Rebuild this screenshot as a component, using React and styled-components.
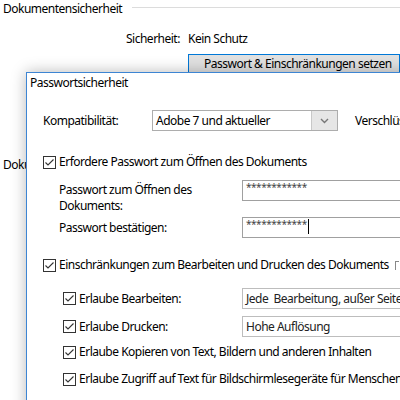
import React from 'react';
import styled, { createGlobalStyle } from 'styled-components';

const Global = createGlobalStyle`
  html, body { margin: 0; padding: 0; background: #fff; }
  body {
    font-family: "Noto Sans", "Segoe UI", sans-serif;
    font-size: 12px;
    letter-spacing: -0.5px;
    color: #000;
  }
`;

const Screen = styled.div`
  position: relative;
  width: 400px;
  height: 400px;
  overflow: hidden;
  background: #fff;
  line-height: 16px;
`;

const GroupHeader = styled.div`
  display: flex;
  align-items: center;
  height: 18px;
  padding-left: 3px;
`;

const GroupLine = styled.div`
  flex: 1;
  height: 1px;
  background: #dcdcdc;
  margin-left: 10px;
  margin-bottom: 3px;
`;

const SecRow = styled.div`
  display: flex;
  margin-top: 12px;
  padding-left: 126px;
  height: 18px;
  align-items: center;
`;

const SecLabel = styled.span`
  width: 62px;
`;

const ButtonRow = styled.div`
  padding-left: 188px;
  margin-top: 6px;
`;

const PushButton = styled.div`
  box-sizing: border-box;
  width: 212px;
  height: 20px;
  border: 1px solid #0078d7;
  background: #e1e1e1;
  padding-left: 15px;
  line-height: 18px;
  white-space: nowrap;
`;

const BackText = styled.div`
  margin-top: 83px;
  padding-left: 3px;
  white-space: nowrap;
`;

const Dialog = styled.div`
  position: absolute;
  left: 26px;
  top: 72px;
  right: -30px;
  bottom: -30px;
  background: #fff;
  border: 1px solid #3d85d3;
  box-shadow: 0 0 14px rgba(0, 0, 0, 0.28);
`;

const TitleBar = styled.div`
  height: 20px;
  line-height: 20px;
  padding-left: 3px;
`;

const Body = styled.div`
  padding-left: 16px;
`;

const Row = styled.div`
  display: flex;
  align-items: ${p => (p.$top ? 'flex-start' : 'center')};
  margin-top: ${p => p.$mt}px;
  padding-left: ${p => p.$indent || 0}px;
  min-height: ${p => p.$h || 16}px;
  white-space: nowrap;
`;

const FieldLabel = styled.div`
  width: ${p => p.$w}px;
  flex: none;
  padding-top: ${p => p.$pt || 0}px;
  white-space: normal;
`;

const Combo = styled.div`
  box-sizing: border-box;
  display: flex;
  width: 186px;
  height: 21px;
  border: 1px solid #adadad;
  flex: none;
`;

const ComboText = styled.div`
  flex: 1;
  padding-left: 3px;
  line-height: 19px;
`;

const ComboArrow = styled.div`
  width: 25px;
  background: #e6e6e6;
  border-left: 1px solid #c8c8c8;
  display: flex;
  align-items: center;
  justify-content: center;
`;

const AfterText = styled.span`
  margin-left: 17px;
`;

const CheckBox = styled.span`
  box-sizing: border-box;
  width: 13px;
  height: 13px;
  border: 1px solid #333;
  background: #fff;
  display: inline-flex;
  align-items: center;
  justify-content: center;
  flex: none;
  margin-right: 3px;
`;

const CheckLabel = styled.div`
  display: flex;
  align-items: center;
  width: ${p => (p.$w ? `${p.$w}px` : 'auto')};
  flex: none;
`;

const TextBox = styled.div`
  box-sizing: border-box;
  width: 200px;
  height: 21px;
  border: 1px solid #a0a0a0;
  padding-left: 3px;
  font-size: 10px;
  line-height: 13px;
  letter-spacing: -0.45px;
  color: #444;
  flex: none;
`;

const Caret = styled.span`
  display: inline-block;
  width: 1px;
  height: 15px;
  background: #000;
  vertical-align: top;
  margin-top: 1px;
  margin-left: 1px;
`;

const ReadBox = styled.div`
  box-sizing: border-box;
  width: 200px;
  height: 21px;
  border: 1px solid #bdbdbd;
  padding-left: 3px;
  line-height: 19px;
  color: #222;
  flex: none;
  white-space: nowrap;
`;

const EdgeTick = styled.div`
  position: absolute;
  right: 30px;
  top: 188px;
  width: 3px;
  height: 8px;
  border-left: 1px solid #888;
  border-top: 1px solid #888;
`;

const Check = ({ checked = true }) => (
  <CheckBox>
    {checked && (
      <svg width="11" height="11" viewBox="0 0 11 11">
        <path d="M1.5 5.5 L4 8 L9.5 2.5" fill="none" stroke="#333" strokeWidth="1.1" />
      </svg>
    )}
  </CheckBox>
);

export default function App() {
  return (
    <Screen>
      <Global />
      <GroupHeader>
        <span>Dokumentensicherheit</span>
        <GroupLine />
      </GroupHeader>
      <SecRow>
        <SecLabel>Sicherheit:</SecLabel>
        <span>Kein Schutz</span>
      </SecRow>
      <ButtonRow>
        <PushButton>Passwort &amp; Einschränkungen setzen</PushButton>
      </ButtonRow>
      <BackText>Dokumenteinschränkungen – Zusammenfassung</BackText>

      <Dialog>
        <TitleBar>Passwortsicherheit</TitleBar>
        <Body>
          <Row $mt={17} $h={21}>
            <FieldLabel $w={109}>Kompatibilität:</FieldLabel>
            <Combo>
              <ComboText>Adobe 7 und aktueller</ComboText>
              <ComboArrow>
                <svg width="9" height="6" viewBox="0 0 9 6">
                  <path d="M1 1 L4.5 4.5 L8 1" fill="none" stroke="#777" strokeWidth="1.4" />
                </svg>
              </ComboArrow>
            </Combo>
            <AfterText>Verschlüsselungsstufe: 128-Bit AES</AfterText>
          </Row>

          <Row $mt={23}>
            <CheckLabel>
              <Check />
              Erfordere Passwort zum Öffnen des Dokuments
            </CheckLabel>
          </Row>

          <Row $mt={10} $top $indent={16}>
            <FieldLabel $w={183} $pt={2}>Passwort zum Öffnen des Dokuments:</FieldLabel>
            <TextBox>************</TextBox>
          </Row>

          <Row $mt={3} $h={21} $indent={16}>
            <FieldLabel $w={183}>Passwort bestätigen:</FieldLabel>
            <TextBox>
              ************
              <Caret />
            </TextBox>
          </Row>

          <Row $mt={19}>
            <CheckLabel>
              <Check />
              Einschränkungen zum Bearbeiten und Drucken des Dokuments
            </CheckLabel>
          </Row>

          <Row $mt={15} $h={21} $indent={20}>
            <CheckLabel $w={179}>
              <Check />
              Erlaube Bearbeiten:
            </CheckLabel>
            <ReadBox>Jede&nbsp; Bearbeitung, außer Seiten extrahieren</ReadBox>
          </Row>

          <Row $mt={7} $h={21} $indent={20}>
            <CheckLabel $w={179}>
              <Check />
              Erlaube Drucken:
            </CheckLabel>
            <ReadBox>Hohe Auflösung</ReadBox>
          </Row>

          <Row $mt={7} $indent={20}>
            <CheckLabel>
              <Check />
              Erlaube Kopieren von Text, Bildern und anderen Inhalten
            </CheckLabel>
          </Row>

          <Row $mt={11} $indent={20}>
            <CheckLabel>
              <Check />
              Erlaube Zugriff auf Text für Bildschirmlesegeräte für Menschen mit Sehbehinderung
            </CheckLabel>
          </Row>
        </Body>
        <EdgeTick />
      </Dialog>
    </Screen>
  );
}
